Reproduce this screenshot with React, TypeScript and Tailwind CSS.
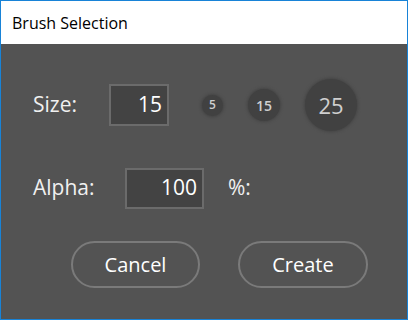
const font = { fontFamily: '"Open Sans", "Noto Sans", sans-serif' };

const Circle = ({ size, label, text }: { size: string; label: string; text: string }) => (
    <div
        className={`${size} ${text} rounded-full bg-[#414141] shadow-[0_0_3px_1px_#444] flex items-center justify-center text-[#cfcfcf]`}
    >
        {label}
    </div>
);

const App = () => {
    return (
        <div
            className="w-[408px] h-[320px] border border-[#1883d7] flex flex-col overflow-hidden"
            style={font}
        >
            {/* title bar */}
            <div className="h-[43px] bg-white flex items-center pl-[11px] text-[16px] text-black shrink-0">
                Brush Selection
            </div>

            {/* body */}
            <div className="flex-1 bg-[#535353] flex flex-col pt-[35px] text-[#f0f0f0]">
                {/* size row */}
                <div className="flex items-center h-[52px] pl-[32px]">
                    <span className="w-[76px] text-[21px]">Size:</span>
                    <div className="w-[60px] h-[42px] border-2 border-[#6b6b6b] bg-[#434343] flex items-center justify-end pr-[5px] text-[21px] text-white">
                        15
                    </div>
                    <div className="flex items-center gap-[25px] ml-[33px]">
                        <Circle size="w-[21px] h-[21px]" text="text-[12px] font-semibold" label="5" />
                        <Circle size="w-[32px] h-[32px]" text="text-[14px] font-semibold" label="15" />
                        <Circle size="w-[52px] h-[52px]" text="text-[22px]" label="25" />
                    </div>
                </div>

                {/* alpha row */}
                <div className="flex items-center h-[42px] mt-[36px] pl-[32px]">
                    <span className="w-[92px] text-[21px]">Alpha:</span>
                    <div className="w-[79px] h-[41px] border-2 border-[#6b6b6b] bg-[#434343] flex items-center justify-end pr-[5px] text-[21px] text-white">
                        100
                    </div>
                    <span className="ml-[24px] text-[21px]">%:</span>
                </div>

                {/* buttons */}
                <div className="flex items-center mt-[32px] pl-[70px] gap-[38px]">
                    <button className="w-[129px] h-[47px] rounded-full border-2 border-[#7a7a7a] text-[20px] text-white">
                        Cancel
                    </button>
                    <button className="w-[130px] h-[47px] rounded-full border-2 border-[#7a7a7a] text-[20px] text-white">
                        Create
                    </button>
                </div>
            </div>
        </div>
    );
};

export default App;
